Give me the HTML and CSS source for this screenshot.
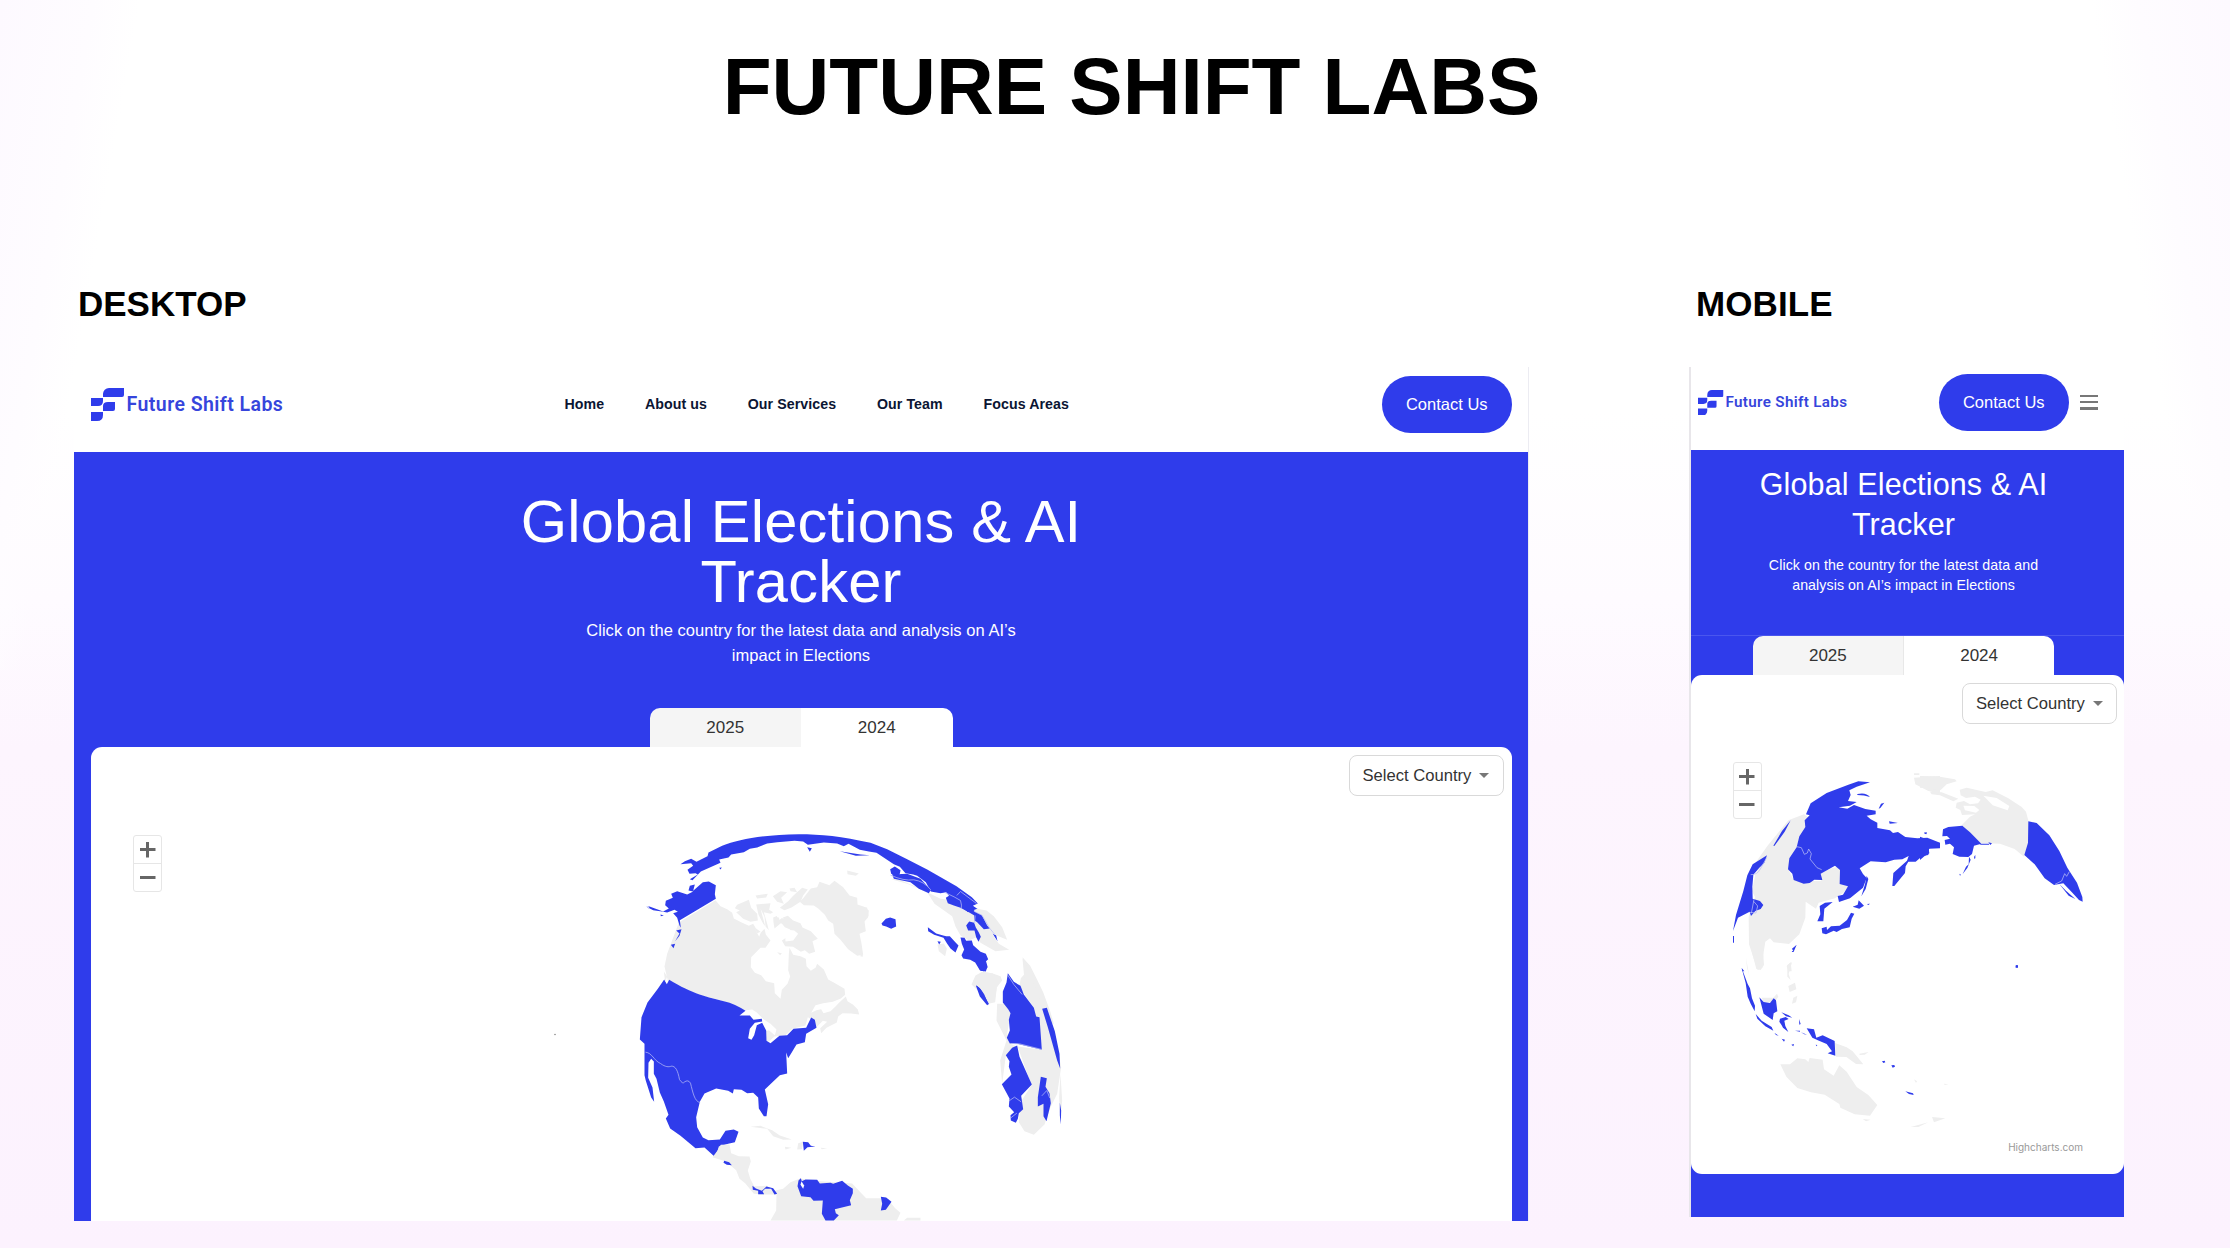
FILE: index.html
```html
<!DOCTYPE html>
<html lang="en">
<head>
<meta charset="utf-8">
<title>Future Shift Labs</title>
<link rel="stylesheet" href="styles.css">
</head>
<body>
<svg class="defs" width="0" height="0" aria-hidden="true">
  <symbol id="mark" viewBox="0 0 33 33">
    <path d="M12 9V6a6 6 0 0 1 6-6h15v7q0 2-2 2H12zM0 10h12v3q0 5-5 5H0zM12 18q0-4 5-4h7v7q0 2-2 2h-10zM0 24h12v3q0 6-6 6H0z"/>
  </symbol>
</svg>
<main class="board">
  <h1 class="title">FUTURE SHIFT LABS</h1>
  <div class="previews">
    <section class="preview preview-desktop">
      <h2 class="label">DESKTOP</h2>
      <div class="site desktop">
        <header class="header">
          <a class="brand"><svg class="brand-mark"><use href="#mark"/></svg><span class="brand-name">Future Shift Labs</span></a>
          <nav class="nav"><a>Home</a><a>About us</a><a>Our Services</a><a>Our Team</a><a>Focus Areas</a></nav>
          <a class="contact">Contact Us</a>
        </header>
        <div class="hero">
          <h3 class="heading">Global Elections &amp; AI<br>Tracker</h3>
          <p class="lead">Click on the country for the latest data and analysis on AI’s<br>impact in Elections</p>
          <div class="tabs"><span class="tab">2025</span><span class="tab tab-active">2024</span></div>
          <div class="panel">
            <svg class="map" viewBox="90.5 746.5 1421 473.5">
              <!-- Canada and Greenland -->
              <g class="land" transform="translate(720 860) scale(.33333)">
                <path d="M-125 186L-15 119L0 137L20 146L35 157L40 174L62 185L85 196L98 190L106 203L122 215L132 205L136 222L150 240L135 262L120 262L92 290L91 320L103 337L122 344L136 362L161 368L163 398L180 415L184 388L201 370L209 348L203 329L205 280L207 262L218 283L240 287L256 295L258 317L271 331L285 322L290 310L310 327L323 357L341 367L372 385L374 403L361 414L337 424L308 428L285 434L272 457L288 449L302 446L309 458L330 452L345 438L357 425L376 408L381 422L398 433L412 447L416 462L392 459L366 458L353 468L349 486L318 502L302 518L299 503L320 484L307 481L288 500L280 480L262 470L255 495L215 505L195 524L162 528L145 543L131 539L136 512L145 509L163 524L168 507L150 490L129 476L108 455L95 447L70 450L48 437L0 419L-60 405L-120 380L-158 361L-168 318L-160 280L-137 218Z"/>
                <path d="M50 133L85 118L92 142L110 160L112 180L90 184L68 175L47 155L58 150L43 143ZM107 132L150 128L146 148L158 155L150 160L130 155L140 190L145 209L128 190L114 163ZM105 105L142 100L137 111L110 114ZM157 107L180 92L200 95L182 112L190 130L170 124ZM185 172L202 166L218 180L240 188L246 201L271 212L292 235L276 242L284 274L266 280L253 269L241 274L218 259L194 257L184 240L208 224L209 207L193 200L184 189L165 188ZM158 171L174 164L179 190L162 204L159 186ZM207 84L222 82L230 95L210 92ZM218 106L245 82L262 87L248 105L240 124L213 141L192 149L178 142L203 122ZM170 275l14 3-5 6z"/>
                <path d="M250 111L271 84L290 80L297 64L327 74L342 61L368 80L387 105L410 112L411 132L431 139L445 150L443 170L432 183L436 212L417 220L423 249L428 283L410 286L383 266L360 238L342 220L338 190L323 180L313 163L294 145L280 135L250 134L238 124ZM380 30l35 9-9 7-25-5z"/>
                <path class="water" d="M100 198l10 20 12-5-6 16M193 207l28 3 12 10-15 20-23 3zM120 145l12 24 4 35M160 140l10 30 20 4M78 128l12 18"/>
              </g>
              <!-- Russia, Scandinavia and Alaska -->
              <g class="active" transform="translate(620 810) scale(.33333)">
                <path d="M216 209L241 183L300 157L296 147L324 141L332 132L370 125L388 115L410 111L440 99L470 95L522 91L548 93L562 103L610 96L650 99L670 107L684 100L718 118L745 123L768 127L820 161L838 169L855 188L878 192L890 196L916 215L931 243L960 248L977 245L989 260L1023 292L1052 312L1061 328L1078 343L1098 350L1118 372L1131 392L1125 365L1104 346L1090 328L1061 300L1077 299L1057 286L1072 279L1054 260L1008 227L962 201L920 177L860 146L800 116L750 97C665 77 600 71 535 71C430 73 355 86 305 106L264 126L261 137L228 154L212 145L193 152L180 161L212 158L218 166L201 178L207 190L225 188L232 192L208 206ZM560 110L574 113L568 124ZM658 122L720 132L748 134L706 136Z"/>
                <path d="M178 329L286 265L283 251L286 224L265 213L247 215L218 241L223 222L208 226L204 240L218 243L200 252L170 242L152 250L157 262L136 271L134 284L145 294L128 303L87 288L78 289L98 299L124 303L140 306L162 298L172 304L158 308L170 322L177 345L181 352ZM167 360L183 356L177 376L164 392L177 369ZM151 403L164 400L159 413ZM79 288l8 2-4 4zM120 312l10 3-9 2zM296 172l8-1-4 6z"/>
              </g>
              <!-- Europe and the Middle East -->
              <g transform="translate(860 810) scale(.33333)">
                <path class="land" d="M92 206L140 220L200 245L222 280L275 317L285 348L300 375L325 390L348 380L360 397L405 422L446 418L415 400L395 370L440 388L425 350L400 317L378 300L350 295L322 305L280 270L240 265L170 230L110 205ZM0 288L20 291L24 316L11 331L12 362H0ZM0 415l8 23-8 0zM231 402L250 399L259 414L254 437L235 422ZM365 484L345 495L333 522L352 540L372 560L381 580L402 573L409 530L425 510L420 497L395 488ZM410 590L431 588L445 601L448 640L415 640ZM486 440L509 466L530 508L548 545L569 602L580 640H532L516 585L492 552L476 528L481 503L493 490Z"/>
                <path class="active" d="M180 205L211 238L205 248L175 235L150 215L100 205L95 192L140 190ZM256 262L275 250L300 245L340 290L343 316L325 305L300 292L280 285L262 278ZM340 302L364 314L380 345L388 354L370 356L350 335L342 330ZM63 339L76 325L89 321L105 326L107 348L92 355L77 348L66 345ZM89 176L103 168L120 179L118 190L104 196L92 190ZM202 350L227 369L248 375L257 377L268 377L286 397L294 405L285 426L270 414L260 400L249 382L221 373L203 362ZM231 392l10 2-5 8zM317 345L326 333L341 337L346 351L355 366L361 379L354 394L347 380L342 360L323 360ZM300 381L312 382L317 391L334 390L338 404L360 424L376 430L383 446L375 454L381 471L370 482L358 479L344 456L329 448L308 444L303 434L311 417L304 400ZM347 524L358 532L371 551L385 583L374 574L360 556Z"/>
                <path class="edge" d="M90 194Q130 212 160 208Q190 212 211 238M253 246Q285 260 300 270Q305 285 302 296M289 255L300 243L348 279M340 302L364 314L373 328L388 354L403 372M344 315L342 340"/>
              </g>
              <!-- Africa -->
              <g transform="translate(960 960) scale(.33333)">
                <path class="land" d="M65 35L37 62L72 97L84 130L104 125L109 80L120 60L95 38ZM110 130L135 130L150 158L140 220L150 250L172 260L213 374L180 425L175 485L192 512L220 523L252 492L270 440L290 400L302 320L285 230L245 140L210 40L186 -5L192 60L232 180L244 268L172 258L136 285L125 370L119 300L138 240L108 180ZM300 340l5 80-6 60-3-70z"/>
                <path class="active" d="M45 0L60 31L76 33L81 18L76 0ZM46 75L58 83L85 130L80 134L58 108ZM142 38L160 64L180 76L190 102L220 142L227 168L237 170L244 268L170 250L148 249L139 232L148 210L145 178L150 158L143 146L127 126L127 93L138 66ZM155 262L170 255L177 289L214 372L182 406L188 446L175 458L172 475L166 487L151 480L150 464L161 455L145 438L147 414L124 371L153 342L145 319L147 302L136 284ZM245 145L259 142L283 212L297 280L299 324L290 300L262 200ZM241 349L259 353L255 379L267 398L271 428L258 482L249 467L249 430L232 438L232 410ZM298 427L302 450L301 492L298 465Z"/>
                <path class="edge" d="M142 44L160 72L185 102M150 249L177 250L244 267M146 421L162 410L182 424M244 406L259 390L268 413M151 472l18-14"/>
              </g>
              <!-- The Americas -->
              <g transform="translate(620 1010) scale(.33333)">
                <path class="active" d="M131 -93L139 -79L146 -92C215 -50 265 -38 310 -28Q345 -20 375 1L357 15L388 15L399 28L424 25L425 33L403 37L388 55L383 83L393 88L401 74L409 44L425 37L437 60L438 91L450 98L477 76L500 74L519 55L557 52L572 21L583 28L588 52L557 70L553 95L528 102L515 124L503 143L497 126L500 189L478 194L455 216L433 237L443 281L438 317L430 317L415 294L413 261L398 247L380 248L363 238L340 236L337 249L323 241L287 234L252 249L238 274L227 320L230 350L247 381L264 389L298 387L315 361L340 357L354 364L343 395L323 400L295 408L292 421L281 437L252 411L225 413L180 376L149 354L136 324L144 313L130 273L118 246L108 205L100 190V153L92 145L84 157L83 202L96 231L101 274L92 261L76 211L72 194V100L58 87L63 20L81 -24L112 -65Z"/>
                <path class="land" d="M301 403L327 402L332 428L355 437L387 438L391 453L382 480L389 504L401 527L440 526L462 541L488 535L510 515L540 503L560 509L695 519L724 550L737 563L778 563L805 570L824 593L840 607L829 630H450L467 600L468 552L430 552L400 550L374 518L357 505L347 479L316 453L276 440L289 423L296 410ZM390 349L420 346L455 359L478 375L514 387L488 388L458 377L440 355ZM533 398l15-4-4 22-14 1zM493 409l20 3-18 5zM600 412l20 1-16 3zM860 622h40v8h-50zM130 -117l10 15-6 17z"/>
                <path class="active" d="M547 394L563 395L571 406L585 408L561 410L550 421ZM311 451L326 455L334 464L319 463L309 457ZM396 526L406 534L424 541L438 528L458 533L470 550L462 552L452 535L434 535L426 542L431 551L413 551L413 541L397 538ZM541 503L544 512L555 507L590 508L598 519L630 517L638 520L665 511L682 525L697 535V548L688 569L692 584L643 596L646 608L655 614L640 630H615L604 610L607 570L579 571L570 560L542 557L531 527L534 510ZM781 559L797 561L813 574L796 598L781 600L785 580Z"/>
                <path class="water" d="M543 512l8 13-3 10-8-12z"/>
                <path class="edge" d="M75 125C95 127 100 150 120 159C135 170 145 170 152 167C165 166 172 180 177 207Q187 222 191 215Q203 206 210 218C217 245 222 274 239 276"/>
              </g>
              <circle class="speck" cx="554.5" cy="1034" r=".8"/>
            </svg>
            <div class="zoom"><button class="zoom-in" aria-label="Zoom in"></button><button aria-label="Zoom out"></button></div>
            <div class="select">Select Country</div>
          </div>
        </div>
      </div>
    </section>
    <section class="preview preview-mobile">
      <h2 class="label">MOBILE</h2>
      <div class="site mobile">
        <header class="header">
          <a class="brand"><svg class="brand-mark"><use href="#mark"/></svg><span class="brand-name">Future Shift Labs</span></a>
          <a class="contact">Contact Us</a>
          <span class="burger"><i></i><i></i><i></i></span>
        </header>
        <div class="hero">
          <div class="intro">
            <h3 class="heading">Global Elections &amp; AI<br>Tracker</h3>
            <p class="lead">Click on the country for the latest data and<br>analysis on AI’s impact in Elections</p>
          </div>
          <div class="tabs"><span class="tab">2025</span><span class="tab tab-active">2024</span></div>
          <div class="panel">
            <svg class="map" viewBox="1691 674 433 499">
              <!-- Asia -->
              <g transform="translate(1710 750) scale(.33333)">
                <path class="land" d="M282 190L297 200L296 213L268 255L263 290L238 325L237 360L251 386L292 390L334 390L332 365L365 352L390 346L391 383L415 407L400 425L375 442L326 455L318 473L287 452L286 500L268 550L237 579L191 574L180 562L166 572L160 610L157 650L143 657L132 625L117 580L116 498L135 438L126 420L136 370L170 315L125 352L172 285L235 208ZM230 645l12-12 3 28h-10zM612 80L690 75V128L655 120L616 100ZM612 67h16v5h-16z"/>
                <path class="active" d="M288 190L302 157L350 126L415 101L445 91L480 94L440 107L418 118L422 132L414 150L440 153L420 164L386 169L412 173L432 162L466 174L497 179V190L470 194L482 205L502 215L502 231L540 238L549 246L564 243L586 258L622 262L652 260L690 275V292L657 293L655 312L637 315L617 332L595 332L587 346L585 366L553 405H547L550 366L591 329L596 315L577 325L553 326L527 334L482 331L449 352L459 369L470 381L459 410L420 442L387 453L383 435L399 431L414 406L389 399L390 357L375 344L332 368L337 387L313 386L299 396L281 398L251 387L247 368L234 355L238 322L260 289L268 256L286 228L284 208L299 193ZM442 129q26-6 38 9-17-6-38-6zM506 173l7-15 10-3-12 16zM537 211l27 5-25 2zM642 246l9-2-2 6z"/>
                <path class="active" d="M242 208L224 242L193 285L190 284L216 240ZM171 313L163 335L148 350L130 371L127 407L128 443L150 450L160 462L152 474L136 480L123 495L119 482L84 500L69 540L78 492L100 420L112 373L128 340ZM470 375L475 384L467 414L454 436L465 400ZM329 465L345 455L368 453L343 473L340 511L322 511L331 490ZM446 448L462 464L448 473L428 467L443 461ZM471 459l9-1-5 4zM423 485L433 488L425 503L419 529L396 534L380 543L371 539L348 550L337 547L335 532L350 527L351 537L363 526L389 524L411 507ZM246 593L260 581L251 602ZM69 555h3v20h-3zM95 651l8 10h-6z"/>
                <path class="edge" d="M260 287L274 290L283 310L292 306L296 294L304 308L300 324L321 350L335 356M122 371Q142 372 151 354L170 320M119 484l19 2 5-21-12-14M132 445l-8 42"/>
              </g>
              <!-- North America -->
              <g transform="translate(1920 750) scale(.33333)">
                <path class="land" d="M0 75L50 76L105 85L110 91L80 100L62 117L0 110ZM30 122L65 124L115 143L100 151L60 133L35 130ZM119 116L140 110L197 123L218 118L265 142L305 168L318 182L328 220L326 270L312 317L284 294L240 278L182 276L125 223L150 197L165 190L126 192L121 177L107 170L110 155L132 150L150 160L174 157L182 146L165 137L138 141L122 133Z"/>
                <path class="water" d="M190 134l40 7 38 24-5 13-45-15zM130 164l33 1 15 12-10 8-33-7z"/>
                <path class="active" d="M67 256L69 235L85 228L127 224L150 244L184 278L162 284L156 309L145 318L118 317L98 309L102 289L90 278L76 281L74 267L90 263L81 255ZM0 257L36 270L40 278L58 275L56 290L38 288L26 293L28 307L14 315L0 327ZM163 316l3-4v10l-4 1zM147 317L152 326L142 351L128 369L138 347L146 340ZM118 368l5 3-3 3zM181 278h26v3h-26zM205 274l11 3-5 5zM13 244l7 2-5 4zM325 211L350 216L388 253L418 300L442 350L471 395L487 438L488 452L477 447L455 423L430 397L402 402L374 382L344 340L313 312L324 275ZM418 399L438 419L466 444L446 434ZM288 643h6v7h-7z"/>
                <path class="edge" d="M405 400L425 390L434 368L440 376L448 362"/>
              </g>
              <!-- South-east Asia and Oceania -->
              <g transform="translate(1680 950) scale(.33333)">
                <path class="land" d="M215 0H249L252 42L242 57L229 54ZM198 20l8 45 5 20-10-35zM322 42l14-8-10 35 6 18-10-10zM325 105l20-10 4 20-20 8zM340 140l12-6-4 20-12 4zM245 140L280 140L291 128L295 137L285 152L252 154ZM301 340L330 340L352 322L376 325L385 333L389 321L428 326L432 355L461 374L478 343L500 362L530 408L565 432L592 462L570 494L524 490L481 470L478 459L434 431L393 424L352 411L319 377ZM465 276L500 289L518 301L550 340L528 339L499 318L468 317ZM538 308l28-5-12 8-15 1zM548 504l24 2-14 5zM692 528l53-14-30 14zM756 498l40 4-34 12zM702 385l9 6-3 5zM792 398l13 2-11 2z"/>
                <path class="active" d="M185 52L191 67L203 99L210 112L216 142L225 164L224 181L212 158L203 137L197 96ZM227 189L245 209L275 228L280 239L256 226L232 203ZM238 139L251 153L270 156L281 142L288 148L292 181L281 187L278 207L251 188ZM304 184L326 193L337 200L318 196ZM300 203L317 198L326 204L313 209L316 225L325 243L309 230L305 223L298 212ZM283 245l13 9-8-2zM345 239h15v3zM363 244l18 7-8-1zM357 204l5 15-4 2zM380 232L402 235L409 260L428 253L464 270L466 314L443 307L456 301L440 279L417 269L397 260ZM305 263l10 3-3 6zM334 281l8-2-2 7zM407 281l5 1-2 4zM606 331l8-2 2 5-6 2zM634 343l9-1 2 5-7 3zM676 421l23 6 2 5-14-3zM335 0h6v3h-4z"/>
                <path class="active" d="M1007 43h6v6h-6z"/>
              </g>
            </svg>
            <div class="zoom"><button class="zoom-in" aria-label="Zoom in"></button><button aria-label="Zoom out"></button></div>
            <div class="select">Select Country</div>
            <span class="credit">Highcharts.com</span>
          </div>
        </div>
      </div>
    </section>
  </div>
</main>
</body>
</html>
```
FILE: styles.css
```css
* { box-sizing: border-box; }
body, h1, h2, h3, p { margin: 0; }
body {
  width: 2230px;
  height: 1248px;
  overflow: hidden;
  font-family: "Liberation Sans", Arial, sans-serif;
  background:
    linear-gradient(100deg, #fdf9ff 0, #fefcff 4%, #fff0 6%) 0 0 / 100% 670px no-repeat,
    linear-gradient(260deg, #fdf9ff 0, #fefcff 4%, #fff0 6%) 0 0 / 100% 520px no-repeat,
    linear-gradient(#fff 0, #fff 33%, #fefbff 48%, #fdf5fe 60%, #fcf2fe 100%);
}
.defs { position: absolute; }
.board { display: flex; flex-direction: column; padding: 41px 106px 0 74px; }
.title {
  padding-left: 65px;
  font-size: 80px;
  line-height: 92px;
  text-align: center;
  white-space: nowrap;
}
.previews { display: flex; justify-content: space-between; margin-top: 151px; }
.label { height: 83px; padding-left: 4px; font-size: 35px; line-height: 40px; }
.preview-desktop { width: 1454px; }
.preview-mobile { width: 433px; }
.preview-mobile .label { padding-left: 5px; letter-spacing: .1px; }

.site { overflow: hidden; background: #fff; }
.desktop { height: 853.5px; box-shadow: 1px 0 #ececf2; }
.mobile { height: 850px; box-shadow: -2px 0 #e8e6ea; }
.header { display: flex; align-items: center; }
.brand { display: flex; align-items: center; color: #3645dc; }
.brand-mark { fill: #2f3ceb; }
.brand-name { font-family: Roboto, sans-serif; font-weight: 600; white-space: nowrap; }
.nav { display: flex; gap: 40.7px; color: #0b1533; font-size: 14.2px; font-weight: 700; letter-spacing: .08px; white-space: nowrap; }
.contact {
  display: flex;
  align-items: center;
  justify-content: center;
  width: 129.5px;
  height: 57px;
  border-radius: 29px;
  color: #fff;
  background: #2f3ceb;
  font-size: 16.5px;
}
.hero { display: flex; flex-direction: column; align-items: center; background: #2f3ceb; color: #fff; text-align: center; }
.heading { font-weight: 400; white-space: nowrap; }
.lead { white-space: nowrap; }
.tabs { display: flex; width: 303px; height: 39.5px; border-radius: 10px 10px 0 0; overflow: hidden; color: #333; font-size: 17px; line-height: 40px; }
.tab { flex: 1; background: #f5f5f5; }
.tab-active { background: #fff; }
.panel { position: relative; overflow: hidden; background: #fff; border-radius: 11px; }
.map { display: block; width: 100%; height: 100%; }
.land { fill: #eee; }
.active { fill: #2f3ceb; }
.water { fill: #fff; }
.edge { fill: none; stroke: #b9bdf6; stroke-width: 2.2; }
.speck { fill: #888; }

.zoom { position: absolute; width: 29px; height: 57px; border: 1px solid #e6e6e6; border-radius: 3px; }
.zoom button {
  display: block;
  width: 27px;
  height: 27.5px;
  padding: 0;
  border: 0;
  background: linear-gradient(#666, #666) center / 15.5px 3px no-repeat;
}
.zoom .zoom-in {
  height: 28px;
  border-bottom: 1px solid #e6e6e6;
  background:
    linear-gradient(#666, #666) center / 15.5px 3px no-repeat,
    linear-gradient(#666, #666) center / 3px 15.5px no-repeat;
}
.select {
  position: absolute;
  display: flex;
  align-items: center;
  gap: 8px;
  width: 155px;
  height: 41px;
  padding-left: 13px;
  border: 1.5px solid #d9d9d9;
  border-radius: 8px;
  color: #333;
  background: #fff;
  font-size: 16.6px;
  white-space: nowrap;
}
.select::after { content: ""; border: 5px solid transparent; border-top-color: #777; border-bottom: 0; }

.desktop .header { height: 84.5px; padding: 0 16.5px 10px; }
.desktop .brand { width: 474px; gap: 3px; }
.desktop .brand-mark { width: 33px; height: 33px; }
.desktop .brand-name { font-size: 19.5px; letter-spacing: .45px; }
.desktop .contact { margin-left: auto; }
.desktop .hero { height: 769px; padding-top: 40.5px; }
.desktop .heading { font-size: 59.6px; line-height: 59.7px; letter-spacing: .2px; }
.desktop .lead { margin-top: 7px; font-size: 16.5px; letter-spacing: .04px; line-height: 24.5px; }
.desktop .tabs { flex: none; margin-top: 40.5px; }
.desktop .panel { flex: none; width: 1421px; height: 473.5px; border-radius: 11px 11px 0 0; }
.desktop .zoom { left: 42.5px; top: 87.5px; }
.desktop .select { right: 8px; top: 8px; }

.mobile .header { height: 82.5px; padding: 0 26px 12px 7px; }
.mobile .brand { gap: 2px; }
.mobile .brand-mark { width: 25.5px; height: 25.5px; }
.mobile .brand-name { font-size: 15.2px; letter-spacing: .33px; }
.mobile .contact { margin-left: auto; }
.burger { display: flex; flex-direction: column; gap: 4px; width: 18.5px; margin-left: 11px; }
.burger i { height: 2.2px; background: #777; }
.mobile .hero { height: 768.5px; }
.intro { width: 100%; height: 186.5px; padding: 14px 8px 0 0; border-bottom: 1px solid #4a56ee; }
.mobile .heading { font-size: 30.5px; letter-spacing: .13px; line-height: 40px; }
.mobile .lead { margin-top: 11px; font-size: 14.2px; letter-spacing: .08px; line-height: 20.5px; }
.mobile .tabs { margin-right: 8px; width: 301.5px; height: 39px; }
.mobile .tab:first-child { border-right: 1px solid #e8e8e8; }
.mobile .panel { width: 433px; height: 499px; }
.mobile .zoom { left: 41.5px; top: 87px; }
.mobile .select { right: 7px; top: 8px; }
.credit { position: absolute; right: 41px; bottom: 20px; color: #999; font-family: Inter, sans-serif; font-size: 10px; line-height: 14px; }
```
